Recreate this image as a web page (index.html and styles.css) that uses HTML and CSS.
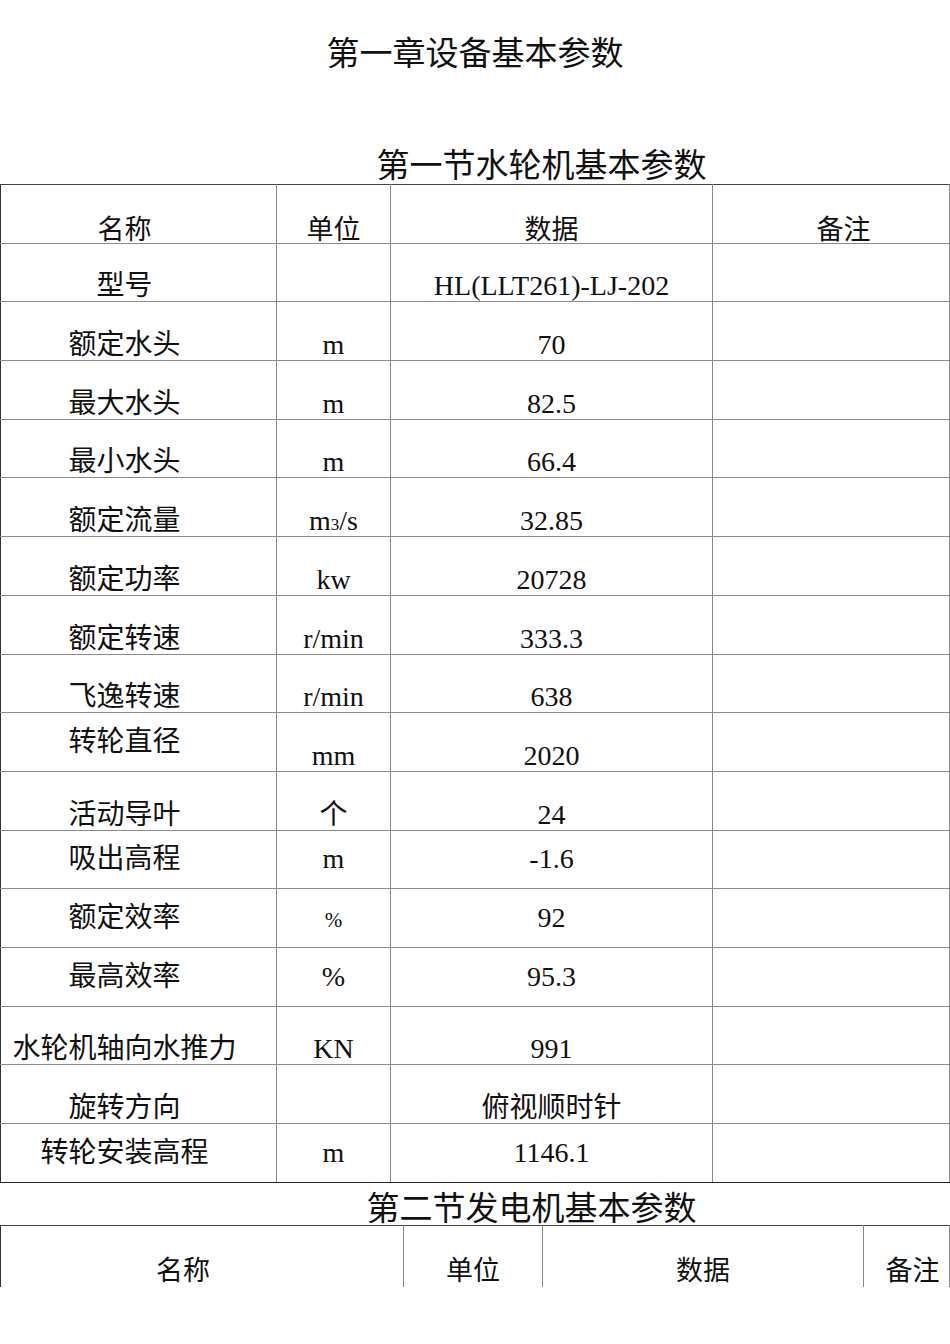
FILE: index.html
```html
<!DOCTYPE html>
<html lang="zh">
<head>
<meta charset="utf-8">
<title>第一章设备基本参数</title>
<link rel="stylesheet" href="styles.css">
</head>
<body>
<div class="page">
  <h1 class="chapter">第一章设备基本参数</h1>
  <h2 class="section s1">第一节水轮机基本参数</h2>
  <table class="params t1">
    <colgroup>
      <col class="c-name"><col class="c-unit"><col class="c-data"><col class="c-note">
    </colgroup>
    <tr class="head">
      <td class="name">名称</td><td>单位</td><td>数据</td><td class="note">备注</td>
    </tr>
    <tr><td class="name">型号</td><td></td><td>HL(LLT261)-LJ-202</td><td></td></tr>
    <tr><td class="name">额定水头</td><td>m</td><td>70</td><td></td></tr>
    <tr><td class="name">最大水头</td><td>m</td><td>82.5</td><td></td></tr>
    <tr><td class="name">最小水头</td><td>m</td><td>66.4</td><td></td></tr>
    <tr><td class="name">额定流量</td><td>m<span class="small">3</span>/s</td><td>32.85</td><td></td></tr>
    <tr><td class="name">额定功率</td><td>kw</td><td>20728</td><td></td></tr>
    <tr><td class="name">额定转速</td><td>r/min</td><td>333.3</td><td></td></tr>
    <tr><td class="name">飞逸转速</td><td>r/min</td><td>638</td><td></td></tr>
    <tr><td class="name mid">转轮直径</td><td>mm</td><td>2020</td><td></td></tr>
    <tr><td class="name">活动导叶</td><td>个</td><td>24</td><td></td></tr>
    <tr class="mid"><td class="name">吸出高程</td><td>m</td><td>-1.6</td><td></td></tr>
    <tr class="mid"><td class="name">额定效率</td><td><span class="pct">%</span></td><td>92</td><td></td></tr>
    <tr class="mid"><td class="name">最高效率</td><td>%</td><td>95.3</td><td></td></tr>
    <tr><td class="name">水轮机轴向水推力</td><td>KN</td><td>991</td><td></td></tr>
    <tr><td class="name">旋转方向</td><td></td><td>俯视顺时针</td><td></td></tr>
    <tr class="mid last"><td class="name">转轮安装高程</td><td>m</td><td>1146.1</td><td></td></tr>
  </table>
  <h2 class="section s2">第二节发电机基本参数</h2>
  <table class="params t2">
    <colgroup>
      <col class="d-name"><col class="d-unit"><col class="d-data"><col class="d-note">
    </colgroup>
    <tr class="head">
      <td class="name2">名称</td><td>单位</td><td>数据</td><td class="note2">备注</td>
    </tr>
  </table>
</div>
</body>
</html>
```
FILE: styles.css
```css
html, body {
  margin: 0;
  padding: 0;
  background: #fff;
}
body {
  font-family: "Liberation Serif", "Noto Sans CJK SC", serif;
  color: #111;
}
.page {
  width: 950px;
}
.chapter {
  margin: 35px 0 0;
  font-size: 33px;
  line-height: 33px;
  font-weight: normal;
  text-align: center;
  font-family: "Noto Sans CJK SC", sans-serif;
}
.section {
  font-size: 33px;
  line-height: 33px;
  font-weight: normal;
  text-align: center;
  font-family: "Noto Sans CJK SC", sans-serif;
}
.s1 {
  margin: 79px 0 4px;
  padding-left: 133px;
}
.s2 {
  margin: 7px 0 2px;
  padding-left: 113px;
}
.params {
  border-collapse: collapse;
  table-layout: fixed;
  width: 949px;
}
.params td {
  border-left: 1px solid #333;
  border-right: 1px solid #888;
  border-top: 1px solid #8a8a8a;
  border-bottom: 1px solid #8a8a8a;
  height: 57.7px;
  padding: 0;
  text-align: center;
  vertical-align: bottom;
  font-size: 28px;
  line-height: 30px;
  white-space: nowrap;
}
.params td:last-child {
  border-right: 1px solid #888;
}
.params tr:first-child td {
  border-top: 1px solid #444;
}
.params tr.last td {
  border-bottom: 1px solid #222;
}
.params tr.mid td,
.params td.mid {
  vertical-align: middle;
  line-height: 30px;
}
.c-name { width: 276px; }
.c-unit { width: 114px; }
.c-data { width: 322px; }
.c-note { width: 237px; }
.d-name { width: 403px; }
.d-unit { width: 139px; }
.d-data { width: 321px; }
.d-note { width: 86px; }
.name {
  padding-right: 28px !important;
}
.head td {
  font-size: 27px;
  font-family: "Noto Sans CJK SC", sans-serif;
}
.note {
  padding-left: 25px !important;
}
.small {
  font-size: 17px;
  line-height: 1;
}
.pct {
  font-size: 21px;
  line-height: 1;
}
.t2 td {
  height: 32px;
  vertical-align: top;
  padding-top: 28px;
  border-bottom: 1px solid transparent;
}
.name2 {
  padding-right: 38px !important;
}
.note2 {
  padding-left: 12px !important;
}
```
